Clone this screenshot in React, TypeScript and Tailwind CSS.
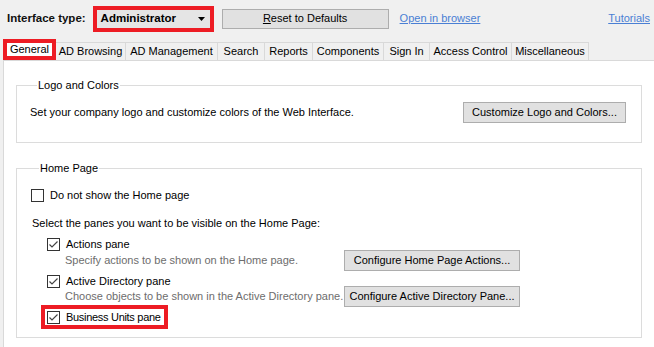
import React from 'react';

const tabs = [
    { label: 'AD Browsing', w: 'w-[70px]' },
    { label: 'AD Management', w: 'w-[92px]' },
    { label: 'Search', w: 'w-[47px]' },
    { label: 'Reports', w: 'w-[48px]' },
    { label: 'Components', w: 'w-[71px]' },
    { label: 'Sign In', w: 'w-[46px]' },
    { label: 'Access Control', w: 'w-[82px]' },
    { label: 'Miscellaneous', w: 'w-[77px]' },
];

function CheckBox({ checked }: { checked?: boolean }) {
    return (
        <svg width="13" height="13" viewBox="0 0 13 13" className="shrink-0">
            <rect x="0.5" y="0.5" width="12" height="12" fill="#fff" stroke="#333" />
            {checked && <polyline points="2.5,6.5 5,9 10.5,3.5" fill="none" stroke="#444" strokeWidth="1.2" />}
        </svg>
    );
}

function Button({ children, className }: { children: React.ReactNode; className?: string }) {
    return (
        <div className={`flex items-center justify-center bg-[#e1e1e1] border border-[#adadad] text-black shrink-0 ${className ?? ''}`}>
            {children}
        </div>
    );
}

export default function App() {
    return (
        <div className="w-[654px] h-[347px] bg-[#f0f0f0] overflow-hidden whitespace-nowrap text-[11px] leading-none text-black font-['Liberation_Sans',Arial,sans-serif]">
            {/* Top bar */}
            <div className="flex items-center h-[36px] pt-[1px]">
                <span className="ml-[7px] font-bold text-[11.5px] text-[#111]">Interface type:</span>
                <div className="ml-[7px] w-[121px] h-[26px] border-4 border-[#ed1c24] bg-[#e5e5e5] flex items-center justify-between pl-[4px] pr-[5px]">
                    <span className="font-bold text-[11.5px]">Administrator</span>
                    <svg width="7" height="4" viewBox="0 0 7 4"><polygon points="0,0 7,0 3.5,4" fill="#000" /></svg>
                </div>
                <Button className="ml-[8px] w-[167px] h-[20px]">
                    <span><span className="underline">R</span>eset to Defaults</span>
                </Button>
                <span className="ml-[11px] text-[#4a7fd4] underline">Open in browser</span>
                <span className="ml-auto mr-[4px] text-[#4a7fd4] underline">Tutorials</span>
            </div>

            {/* Tabs */}
            <div className="flex items-end h-[24px] pl-[3px]">
                <div className="w-[53px] h-[21px] border-4 border-[#ed1c24] bg-white flex items-center justify-center">General</div>
                {tabs.map((t) => (
                    <div key={t.label} className={`${t.w} h-[18px] border-t border-r border-[#d9d9d9] flex items-center justify-center`}>
                        {t.label}
                    </div>
                ))}
            </div>

            {/* Panel */}
            <div className="ml-[3px] h-[287px] bg-white border-l border-t border-[#d9d9d9] pt-[18px] pl-[12px] pr-[12px]">
                <fieldset className="border border-[#dcdcdc] h-[64px] pl-[13px] pr-[15px]">
                    <legend className="ml-[7px] px-[1px] h-[13px] leading-[13px]">Logo and Colors</legend>
                    <div className="flex items-center justify-between mt-[10px]">
                        <span>Set your company logo and customize colors of the Web Interface.</span>
                        <Button className="w-[163px] h-[21px]">Customize Logo and Colors...</Button>
                    </div>
                </fieldset>

                <fieldset className="mt-[19px] border border-[#dcdcdc] h-[176px] pl-[14px]">
                    <legend className="ml-[8px] px-[1px] h-[13px] leading-[13px]">Home Page</legend>
                    <div className="flex items-center gap-[6px] h-[13px] mt-[14px]">
                        <CheckBox />
                        <span>Do not show the Home page</span>
                    </div>
                    <div className="mt-[15px] ml-[1px] h-[12px] flex items-center">
                        Select the panes you want to be visible on the Home Page:
                    </div>
                    <div className="pl-[16px]">
                        <div className="mt-[9px] flex items-center gap-[6px] h-[13px]">
                            <CheckBox checked />
                            <span>Actions pane</span>
                        </div>
                        <div className="flex items-center h-[21px] -mt-[1px]">
                            <span className="ml-[18px] w-[279px] text-[#6d6d6d]">Specify actions to be shown on the Home page.</span>
                            <Button className="w-[176px] h-[21px]">Configure Home Page Actions...</Button>
                        </div>
                        <div className="mt-[4px] flex items-center gap-[6px] h-[13px]">
                            <CheckBox checked />
                            <span>Active Directory pane</span>
                        </div>
                        <div className="flex items-center h-[21px] -mt-[2px]">
                            <span className="ml-[18px] w-[279px] text-[#6d6d6d]">Choose objects to be shown in the Active Directory pane.</span>
                            <Button className="w-[176px] h-[21px]">Configure Active Directory Pane...</Button>
                        </div>
                        <div className="-ml-[6px] mt-[-2px] w-[127px] h-[24px] border-4 border-[#ed1c24] flex items-center gap-[6px] pl-[2px]">
                            <CheckBox checked />
                            <span className="tracking-[-0.3px]">Business Units pane</span>
                        </div>
                    </div>
                </fieldset>
            </div>
        </div>
    );
}
